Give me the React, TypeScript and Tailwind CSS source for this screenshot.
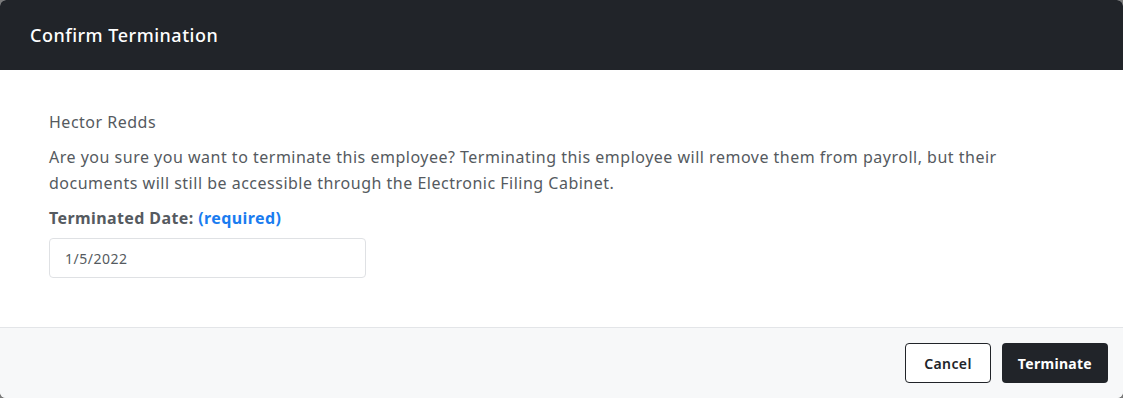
import React from 'react';

const App: React.FC = () => {
  return (
    <div className="w-[1123px] h-[398px] bg-[#7a7a7a] font-['Noto_Sans',sans-serif]">
      <div className="w-full h-full rounded-md overflow-hidden flex flex-col bg-white">
        <div className="h-[70px] shrink-0 bg-[#212429] flex items-center px-[30px]">
          <h2 className="text-[18px] font-medium text-white tracking-[0.5px]">Confirm Termination</h2>
        </div>

        <div className="flex-1 min-h-0 px-[49px] pt-[39px] tracking-[0.5px]">
          <p className="text-[16px] text-[#555a60] leading-[26px]">Hector Redds</p>
          <p className="text-[16px] text-[#555a60] leading-[26px] mt-[9px] max-w-[980px]">
            Are you sure you want to terminate this employee? Terminating this employee will remove them from payroll, but their documents will still be accessible through the Electronic Filing Cabinet.
          </p>
          <p className="text-[16px] font-bold text-[#555a60] leading-[26px] mt-[9px] tracking-[0.4px]">
            Terminated Date: <span className="text-[#1a7cf0]">(required)</span>
          </p>
          <div className="mt-[7px] w-[317px] h-[40px] border border-[#dfe1e4] rounded-[4px] flex items-center px-[15px]">
            <span className="text-[14px] text-[#555a60]">1/5/2022</span>
          </div>
        </div>

        <div className="h-[71px] shrink-0 bg-[#f7f8f9] border-t border-[#e3e5e8] flex items-center justify-end gap-[11px] px-[15px]">
          <button className="h-[40px] px-[18px] rounded-[4px] border border-[#212429] bg-white text-[14px] font-semibold text-[#212429] tracking-[0.4px]">
            Cancel
          </button>
          <button className="h-[40px] px-[16px] rounded-[4px] bg-[#212429] text-[14px] font-bold text-white tracking-[0.3px]">
            Terminate
          </button>
        </div>
      </div>
    </div>
  );
};

export default App;
